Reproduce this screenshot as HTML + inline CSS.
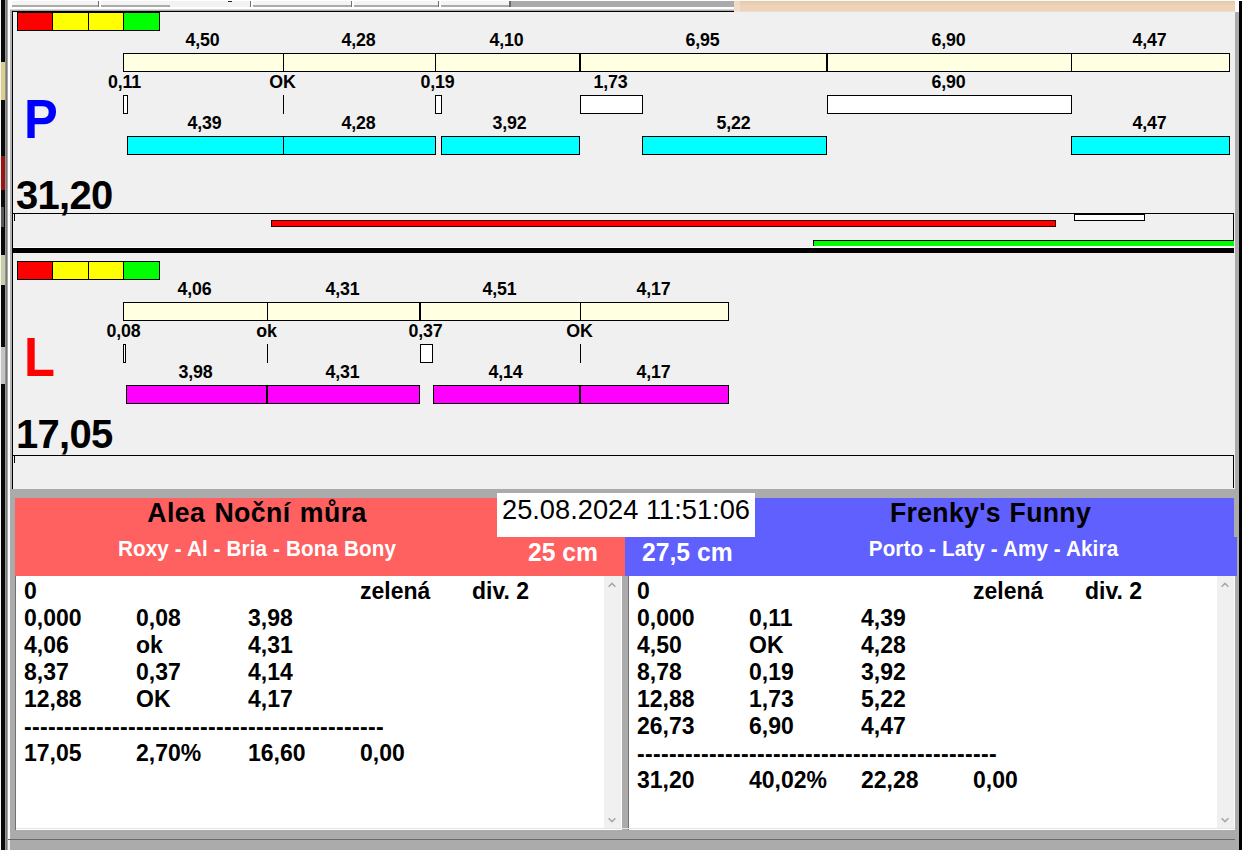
<!DOCTYPE html>
<html lang="cs">
<head>
<meta charset="utf-8">
<title>Flyball</title>
<style>
html,body{margin:0;padding:0;}
body{width:1242px;height:850px;overflow:hidden;position:relative;background:#f0f0f0;font-family:"Liberation Sans",Arial,sans-serif;color:#000;}
.a{position:absolute;}
.bx{position:absolute;box-sizing:border-box;border:1px solid #000;height:19px;}
.lb{transform:scaleY(1.035);transform-origin:50% 16.2px;position:absolute;font-weight:bold;font-size:17.8px;letter-spacing:-0.2px;line-height:20px;width:80px;margin-left:-41px;text-align:center;white-space:nowrap;}
.cream{background:#ffffe1;}
.cyan{background:#00ffff;}
.mag{background:#ff00ff;}
.wh{background:#fff;}
.tick{position:absolute;width:1px;height:19px;background:#000;}
.big{transform:scaleY(1.035);transform-origin:0 33.9px;position:absolute;font-weight:bold;font-size:40px;letter-spacing:-0.7px;line-height:40px;white-space:nowrap;left:16px;}
.letter{position:absolute;font-weight:bold;font-size:53px;line-height:56px;left:24.1px;transform:scale(0.955,1.035);transform-origin:0 46.4px;}
.lst{position:absolute;font-weight:bold;font-size:23px;line-height:27px;white-space:nowrap;}
.lst span{position:absolute;transform:scaleY(1.035);transform-origin:0 21.5px;}
.panel{position:absolute;left:0;width:1242px;height:250px;}
</style>
</head>
<body>

<!-- top strip -->
<div class="a" style="left:0;top:0;width:1242px;height:12px;background:#fff;"></div>
<div class="a" style="left:12px;top:1px;width:498px;height:4px;background:#f4f4f4;"></div>
<div class="a" style="left:12px;top:5px;width:498px;height:2px;background:#ababab;"></div>
<div class="a" style="left:98px;top:1px;width:1px;height:6px;background:#707070;"></div>
<div class="a" style="left:99px;top:0px;width:2px;height:7px;background:#fff;"></div>
<div class="a" style="left:250px;top:1px;width:1px;height:6px;background:#707070;"></div>
<div class="a" style="left:251px;top:0px;width:2px;height:7px;background:#fff;"></div>
<div class="a" style="left:351px;top:1px;width:1px;height:6px;background:#707070;"></div>
<div class="a" style="left:352px;top:0px;width:2px;height:7px;background:#fff;"></div>
<div class="a" style="left:438px;top:1px;width:1px;height:6px;background:#707070;"></div>
<div class="a" style="left:439px;top:0px;width:2px;height:7px;background:#fff;"></div>
<div class="a" style="left:170px;top:1px;width:80px;height:6px;background:#f2f2f2;"></div>
<div class="a" style="left:228px;top:1px;width:4px;height:1px;background:#222;"></div>
<div class="a" style="left:510px;top:1px;width:224px;height:6px;background:#ababab;"></div>
<div class="a" style="left:509px;top:1px;width:2px;height:6px;background:#6a6a6a;"></div>
<div class="a" style="left:10px;top:9px;width:724px;height:1px;background:#d6d6d6;"></div>
<div class="a" style="left:10px;top:10px;width:724px;height:1px;background:#ababab;"></div>
<div class="a" style="left:12px;top:11px;width:722px;height:1px;background:#000;"></div>
<div class="a" style="left:734px;top:0px;width:501px;height:13px;background:linear-gradient(to bottom,#fffcec 0px,#fffcec 1px,#dccab8 1px,#dccab8 2px,#e4ccb6 2px,#e4ccb6 3px,#e9ceb2 3px,#e9ceb2 5px,#f1d2b5 5px,#f1d2b5 9px,#ecd3bb 9px,#ecd3bb 10px,#e4d4c4 10px,#e4d4c4 11px,#eadfd6 11px,#eadfd6 12px,#f5efeb 12px,#f5efeb 13px);"></div>
<div class="a" style="left:734px;top:1px;width:6px;height:11px;background:#f6e4d4;opacity:0.6;"></div>
<div class="panel" style="top:0px;">
<div class="bx" style="left:17px;top:12px;width:36px;background:#ff0000;"></div>
<div class="bx" style="left:52px;top:12px;width:37px;background:#ffff00;"></div>
<div class="bx" style="left:88px;top:12px;width:36px;background:#ffff00;"></div>
<div class="bx" style="left:123px;top:12px;width:37px;background:#00ff00;"></div>
<div class="lb" style="left:203.5px;top:30px;">4,50</div>
<div class="bx cream" style="left:123px;top:53px;width:161px;"></div>
<div class="lb" style="left:359.5px;top:30px;">4,28</div>
<div class="bx cream" style="left:283px;top:53px;width:153px;"></div>
<div class="lb" style="left:507.5px;top:30px;">4,10</div>
<div class="bx cream" style="left:435px;top:53px;width:145px;"></div>
<div class="lb" style="left:703.5px;top:30px;">6,95</div>
<div class="bx cream" style="left:580px;top:53px;width:247px;"></div>
<div class="lb" style="left:949.5px;top:30px;">6,90</div>
<div class="bx cream" style="left:827px;top:53px;width:245px;"></div>
<div class="lb" style="left:1150.5px;top:30px;">4,47</div>
<div class="bx cream" style="left:1071px;top:53px;width:159px;"></div>
<div class="lb" style="left:125.5px;top:72px;">0,11</div>
<div class="bx wh" style="left:123px;top:95px;width:5px;"></div>
<div class="lb" style="left:283.5px;top:72px;">OK</div>
<div class="tick" style="left:283px;top:95px;"></div>
<div class="lb" style="left:438.5px;top:72px;">0,19</div>
<div class="bx wh" style="left:435px;top:95px;width:7px;"></div>
<div class="lb" style="left:611.5px;top:72px;">1,73</div>
<div class="bx wh" style="left:580px;top:95px;width:63px;"></div>
<div class="lb" style="left:949.5px;top:72px;">6,90</div>
<div class="bx wh" style="left:827px;top:95px;width:245px;"></div>
<div class="lb" style="left:205.5px;top:113px;">4,39</div>
<div class="bx cyan" style="left:127px;top:136px;width:157px;"></div>
<div class="lb" style="left:359.5px;top:113px;">4,28</div>
<div class="bx cyan" style="left:283px;top:136px;width:153px;"></div>
<div class="lb" style="left:510.5px;top:113px;">3,92</div>
<div class="bx cyan" style="left:441px;top:136px;width:139px;"></div>
<div class="lb" style="left:734.5px;top:113px;">5,22</div>
<div class="bx cyan" style="left:642px;top:136px;width:185px;"></div>
<div class="lb" style="left:1150.5px;top:113px;">4,47</div>
<div class="bx cyan" style="left:1071px;top:136px;width:159px;"></div>
<div class="letter" style="top:91.5px;color:#0000ff;">P</div>
<div class="big" style="top:175px;">31,20</div>
<div class="a" style="left:13px;top:213px;width:1221px;height:1px;background:#000;"></div>
<div class="a" style="left:1233px;top:213px;width:1px;height:34px;background:#000;"></div>
<div class="a" style="left:14px;top:213px;width:1px;height:8px;background:#000;"></div>
<div class="a" style="box-sizing:border-box;left:271px;top:220px;width:785px;height:7px;background:#ff0000;border:1px solid #300;"></div>
<div class="a" style="box-sizing:border-box;left:1074px;top:214px;width:71px;height:7px;background:#fff;border:1px solid #000;"></div>
<div class="a" style="box-sizing:border-box;left:813px;top:240px;width:421px;height:6px;background:#00ff00;border-top:1px solid #000;border-left:1px solid #000;"></div><div class="a" style="left:813px;top:246px;width:421px;height:1px;background:#fff;"></div>
</div>
<div class="a" style="left:13px;top:248px;width:1221px;height:5px;background:#000;"></div>
<div class="a" style="left:13px;top:247px;width:1221px;height:1px;background:#fff;"></div>
<div class="panel" style="top:249px;">
<div class="bx" style="left:17px;top:12px;width:36px;background:#ff0000;"></div>
<div class="bx" style="left:52px;top:12px;width:37px;background:#ffff00;"></div>
<div class="bx" style="left:88px;top:12px;width:36px;background:#ffff00;"></div>
<div class="bx" style="left:123px;top:12px;width:37px;background:#00ff00;"></div>
<div class="lb" style="left:195.5px;top:30px;">4,06</div>
<div class="bx cream" style="left:123px;top:53px;width:145px;"></div>
<div class="lb" style="left:343.5px;top:30px;">4,31</div>
<div class="bx cream" style="left:267px;top:53px;width:153px;"></div>
<div class="lb" style="left:500.5px;top:30px;">4,51</div>
<div class="bx cream" style="left:420px;top:53px;width:161px;"></div>
<div class="lb" style="left:654.5px;top:30px;">4,17</div>
<div class="bx cream" style="left:580px;top:53px;width:149px;"></div>
<div class="lb" style="left:124.5px;top:72px;">0,08</div>
<div class="bx wh" style="left:123px;top:95px;width:3px;"></div>
<div class="lb" style="left:267.5px;top:72px;">ok</div>
<div class="tick" style="left:267px;top:95px;"></div>
<div class="lb" style="left:426.5px;top:72px;">0,37</div>
<div class="bx wh" style="left:420px;top:95px;width:13px;"></div>
<div class="lb" style="left:580.5px;top:72px;">OK</div>
<div class="tick" style="left:580px;top:95px;"></div>
<div class="lb" style="left:196.5px;top:113px;">3,98</div>
<div class="bx mag" style="left:126px;top:136px;width:141px;"></div>
<div class="lb" style="left:343.5px;top:113px;">4,31</div>
<div class="bx mag" style="left:267px;top:136px;width:153px;"></div>
<div class="lb" style="left:506.5px;top:113px;">4,14</div>
<div class="bx mag" style="left:433px;top:136px;width:147px;"></div>
<div class="lb" style="left:654.5px;top:113px;">4,17</div>
<div class="bx mag" style="left:580px;top:136px;width:149px;"></div>
<div class="letter" style="top:80.5px;color:#ff0000;">L</div>
<div class="big" style="top:165px;">17,05</div>
<div class="a" style="left:13px;top:206px;width:1221px;height:1px;background:#000;"></div>
<div class="a" style="left:1233px;top:206px;width:1px;height:33px;background:#000;"></div>
<div class="a" style="left:14px;top:206px;width:1px;height:8px;background:#000;"></div>
</div>
<!-- bottom -->
<div class="a" style="left:10px;top:489px;width:1229px;height:361px;background:#ababab;"></div>
<div class="a" style="left:15px;top:498px;width:610px;height:78px;background:#ff6060;"></div>
<div class="a" style="left:625px;top:498px;width:609px;height:78px;background:#6060ff;"></div>
<div class="a" style="left:497px;top:493px;width:258px;height:44px;background:#fff;"></div>
<div class="a" style="left:497px;top:494px;width:258px;height:32px;line-height:32px;transform:scaleY(1.035);transform-origin:50% 25.4px;font-size:27.25px;text-align:center;white-space:nowrap;">25.08.2024 11:51:06</div>
<div class="a" style="left:15px;top:498px;width:484px;height:30px;line-height:30px;transform:scaleY(1.035);transform-origin:50% 24.2px;font-size:26.67px;letter-spacing:0.45px;word-spacing:1.2px;font-weight:bold;text-align:center;white-space:nowrap;">Alea Noční můra</div>
<div class="a" style="left:15px;top:537px;width:484px;height:24px;line-height:24px;transform:scaleY(1.035);transform-origin:50% 19.2px;font-size:20.67px;letter-spacing:0.12px;font-weight:bold;text-align:center;color:#fff;white-space:nowrap;">Roxy - Al - Bria - Bona Bony</div>
<div class="a" style="left:499px;top:539.5px;width:99px;height:26px;line-height:26px;transform:scaleY(1.035);transform-origin:50% 21.6px;font-size:24.7px;font-weight:bold;text-align:right;color:#fff;white-space:nowrap;">25 cm</div>
<div class="a" style="left:642px;top:539.5px;width:110px;height:26px;line-height:26px;transform:scaleY(1.035);transform-origin:50% 21.6px;font-size:24.7px;font-weight:bold;text-align:left;color:#fff;white-space:nowrap;">27,5 cm</div>
<div class="a" style="left:748.5px;top:498px;width:484px;height:30px;line-height:30px;transform:scaleY(1.035);transform-origin:50% 24.2px;font-size:26.67px;letter-spacing:0.3px;word-spacing:1px;font-weight:bold;text-align:center;white-space:nowrap;">Frenky's Funny</div>
<div class="a" style="left:751.5px;top:537px;width:484px;height:24px;line-height:24px;transform:scaleY(1.035);transform-origin:50% 19.2px;font-size:20.67px;letter-spacing:0.12px;font-weight:bold;text-align:center;color:#fff;white-space:nowrap;">Porto - Laty - Amy - Akira</div>
<div class="a" style="left:16px;top:576px;width:606px;height:254px;background:#fff;overflow:hidden;">
<div class="a" style="right:1px;top:0;width:17px;height:253px;background:#f0f0f0;"></div>
<svg class="a" style="right:6px;top:6px;" width="8" height="6" viewBox="0 0 8 6"><path d="M0.6 4.8 L4 1.4 L7.4 4.8" fill="none" stroke="#a6a6a6" stroke-width="1.5"/></svg>
<svg class="a" style="right:6px;top:241px;" width="8" height="6" viewBox="0 0 8 6"><path d="M0.6 1.2 L4 4.6 L7.4 1.2" fill="none" stroke="#a6a6a6" stroke-width="1.5"/></svg>
<div class="lst" style="left:0;top:2px;height:27px;">
<span style="left:8px;">0</span>
<span style="left:344px;">zelená</span>
<span style="left:456px;">div. 2</span>
</div>
<div class="lst" style="left:0;top:29px;height:27px;">
<span style="left:8px;">0,000</span>
<span style="left:120px;">0,08</span>
<span style="left:232px;">3,98</span>
</div>
<div class="lst" style="left:0;top:56px;height:27px;">
<span style="left:8px;">4,06</span>
<span style="left:120px;">ok</span>
<span style="left:232px;">4,31</span>
</div>
<div class="lst" style="left:0;top:83px;height:27px;">
<span style="left:8px;">8,37</span>
<span style="left:120px;">0,37</span>
<span style="left:232px;">4,14</span>
</div>
<div class="lst" style="left:0;top:110px;height:27px;">
<span style="left:8px;">12,88</span>
<span style="left:120px;">OK</span>
<span style="left:232px;">4,17</span>
</div>
<div class="lst" style="left:0;top:137px;height:27px;">
<span style="left:8px;top:1px;letter-spacing:0.34px;">---------------------------------------------</span>
</div>
<div class="lst" style="left:0;top:164px;height:27px;">
<span style="left:8px;">17,05</span>
<span style="left:120px;">2,70%</span>
<span style="left:232px;">16,60</span>
<span style="left:344px;">0,00</span>
</div>
</div>
<div class="a" style="left:629px;top:576px;width:606px;height:254px;background:#fff;overflow:hidden;">
<div class="a" style="right:1px;top:0;width:17px;height:253px;background:#f0f0f0;"></div>
<svg class="a" style="right:6px;top:6px;" width="8" height="6" viewBox="0 0 8 6"><path d="M0.6 4.8 L4 1.4 L7.4 4.8" fill="none" stroke="#a6a6a6" stroke-width="1.5"/></svg>
<svg class="a" style="right:6px;top:241px;" width="8" height="6" viewBox="0 0 8 6"><path d="M0.6 1.2 L4 4.6 L7.4 1.2" fill="none" stroke="#a6a6a6" stroke-width="1.5"/></svg>
<div class="lst" style="left:0;top:2px;height:27px;">
<span style="left:8px;">0</span>
<span style="left:344px;">zelená</span>
<span style="left:456px;">div. 2</span>
</div>
<div class="lst" style="left:0;top:29px;height:27px;">
<span style="left:8px;">0,000</span>
<span style="left:120px;">0,11</span>
<span style="left:232px;">4,39</span>
</div>
<div class="lst" style="left:0;top:56px;height:27px;">
<span style="left:8px;">4,50</span>
<span style="left:120px;">OK</span>
<span style="left:232px;">4,28</span>
</div>
<div class="lst" style="left:0;top:83px;height:27px;">
<span style="left:8px;">8,78</span>
<span style="left:120px;">0,19</span>
<span style="left:232px;">3,92</span>
</div>
<div class="lst" style="left:0;top:110px;height:27px;">
<span style="left:8px;">12,88</span>
<span style="left:120px;">1,73</span>
<span style="left:232px;">5,22</span>
</div>
<div class="lst" style="left:0;top:137px;height:27px;">
<span style="left:8px;">26,73</span>
<span style="left:120px;">6,90</span>
<span style="left:232px;">4,47</span>
</div>
<div class="lst" style="left:0;top:164px;height:27px;">
<span style="left:8px;top:1px;letter-spacing:0.34px;">---------------------------------------------</span>
</div>
<div class="lst" style="left:0;top:191px;height:27px;">
<span style="left:8px;">31,20</span>
<span style="left:120px;">40,02%</span>
<span style="left:232px;">22,28</span>
<span style="left:344px;">0,00</span>
</div>
</div>
<div class="a" style="left:15px;top:576px;width:1px;height:254px;background:#707070;"></div>
<div class="a" style="left:628px;top:576px;width:1px;height:254px;background:#707070;"></div>
<div class="a" style="left:16px;top:828px;width:1219px;height:1px;background:#e3e3e3;"></div>
<div class="a" style="left:8px;top:839px;width:1231px;height:1px;background:#6a6a6a;"></div>
<div class="a" style="left:1237px;top:840px;width:2px;height:10px;background:#fff;"></div>
<!-- edges -->
<div class="a" style="left:0;top:0;width:1px;height:850px;background:#f4f4f4;"></div>
<div class="a" style="left:1px;top:0;width:4px;height:850px;background:#0a0a0a;"></div>
<div class="a" style="left:1px;top:62px;width:4px;height:38px;background:#dccf8e;"></div>
<div class="a" style="left:1px;top:156px;width:4px;height:34px;background:#9a1212;"></div>
<div class="a" style="left:1px;top:207px;width:3px;height:20px;background:#555;"></div>
<div class="a" style="left:1px;top:255px;width:4px;height:30px;background:#c9cda8;"></div>
<div class="a" style="left:1px;top:347px;width:4px;height:37px;background:#c4c4c4;"></div>
<div class="a" style="left:5px;top:0;width:1px;height:850px;background:#959595;"></div>
<div class="a" style="left:6px;top:0;width:1px;height:850px;background:#787878;"></div>
<div class="a" style="left:7px;top:0;width:1px;height:850px;background:#a8a8a8;"></div>
<div class="a" style="left:8px;top:8px;width:2px;height:831px;background:#fff;"></div>
<div class="a" style="left:10px;top:10px;width:2px;height:479px;background:#b2b2b2;"></div>
<div class="a" style="left:12px;top:11px;width:1px;height:478px;background:#000;"></div>
<div class="a" style="left:1235px;top:12px;width:4px;height:838px;background:#ababab;"></div>
<div class="a" style="left:1234px;top:537px;width:3px;height:39px;background:#6060ff;"></div>
<div class="a" style="left:1239px;top:1px;width:3px;height:849px;background:#000;"></div>
</body>
</html>
